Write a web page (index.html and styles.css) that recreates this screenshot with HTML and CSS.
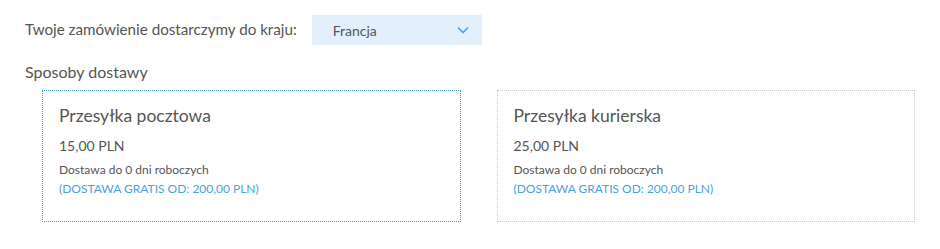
FILE: index.html
```html
<!DOCTYPE html>
<html lang="pl">
<head>
  <meta charset="UTF-8">
  <title>Sposoby dostawy</title>
  <link rel="stylesheet" href="styles.css">
</head>
<body>
  <div class="shipping">
    <div class="country-row">
      <label for="country">Twoje zamówienie dostarczymy do kraju:</label>
      <div class="country-select" id="country">
        <span>Francja</span>
        <svg class="chevron" width="12" height="8" viewBox="0 0 12 8">
          <path d="M1 1.5l5 5 5-5" fill="none" stroke="#4a9fe8" stroke-width="1.6"/>
        </svg>
      </div>
    </div>

    <h3 class="section-title">Sposoby dostawy</h3>

    <div class="methods">
      <div class="method active">
        <h4>Przesyłka pocztowa</h4>
        <div class="price">15,00 PLN</div>
        <div class="time">Dostawa do 0 dni roboczych</div>
        <div class="free">(DOSTAWA GRATIS OD: 200,00 PLN)</div>
      </div>
      <div class="method">
        <h4>Przesyłka kurierska</h4>
        <div class="price">25,00 PLN</div>
        <div class="time">Dostawa do 0 dni roboczych</div>
        <div class="free">(DOSTAWA GRATIS OD: 200,00 PLN)</div>
      </div>
    </div>
  </div>
</body>
</html>
```

FILE: styles.css
```css
body {
  margin: 0;
  background: #fff;
  font-family: Lato, "Open Sans", sans-serif;
  color: #555;
}

.shipping {
  padding: 15px 25px 0;
}

.country-row {
  display: flex;
  align-items: center;
  gap: 15px;
}

.country-row label {
  font-size: 15.2px;
  margin-top: -2px;
}

.country-select {
  width: 170px;
  height: 30px;
  box-sizing: border-box;
  background-color: #e3f0fb;
  display: flex;
  align-items: center;
  justify-content: space-between;
  padding: 0 13px 0 21px;
  font-size: 14px;
  color: #555;
}

.section-title {
  font-size: 16px;
  font-weight: normal;
  margin: 17px 0 0;
  line-height: 20px;
}

.methods {
  display: flex;
  gap: 36px;
  margin: 8px 0 0 17px;
}

.method {
  width: 420px;
  height: 132px;
  box-sizing: border-box;
  border: 1px dotted #c8c8c8;
  padding: 13px 16px 0;
}

.method.active {
  border-color: #3d9be9;
}

.method h4 {
  font-size: 17.5px;
  font-weight: normal;
  margin: 0;
  line-height: 24px;
}

.method .price {
  font-size: 14px;
  margin-top: 8px;
  line-height: 20px;
}

.method .time {
  font-size: 12px;
  margin-top: 6px;
  line-height: 16px;
}

.method .free {
  font-size: 12px;
  color: #4a9fe8;
  margin-top: 3px;
  line-height: 16px;
}
```
